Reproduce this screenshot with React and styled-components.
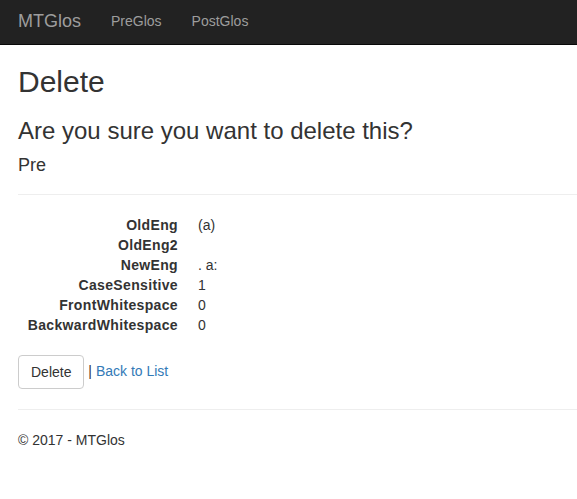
import styled, { createGlobalStyle } from 'styled-components';

const GlobalStyle = createGlobalStyle`
  * { box-sizing: border-box; }
  body {
    margin: 0;
    font-family: "Liberation Sans", Arial, Helvetica, sans-serif;
    font-size: 14px;
    line-height: 1.42857143;
    color: #333;
    background: #fff;
  }
`;

const Navbar = styled.nav`
  display: flex;
  align-items: flex-start;
  height: 45px;
  background: #222;
  border-bottom: 1px solid #080808;
`;

const Brand = styled.a`
  padding: 11px 15px 0 18px;
  font-size: 18px;
  line-height: 20px;
  color: #9d9d9d;
  text-decoration: none;
`;

const NavLink = styled.a`
  padding: 11px 15px 0;
  line-height: 20px;
  color: #9d9d9d;
  text-decoration: none;
`;

const Container = styled.div`
  padding: 0 0 0 18px;
`;

const Title = styled.h2`
  margin: 20px 0 10px;
  font-size: 30px;
  font-weight: 500;
  line-height: 1.1;
`;

const Question = styled.h3`
  margin: 20px 0 10px;
  font-size: 24px;
  font-weight: 500;
  line-height: 1.1;
`;

const Subtitle = styled.h4`
  margin: 12px 0 8px;
  font-size: 18px;
  font-weight: 500;
  line-height: 1.1;
`;

const Rule = styled.hr`
  margin: ${(p) => p.$top ?? 20}px 0 20px;
  border: 0;
  border-top: 1px solid #eee;
  height: 0;
`;

const DetailList = styled.dl`
  margin: 0 0 20px;
  display: grid;
  grid-template-columns: 160px 1fr;
  column-gap: 20px;
`;

const Term = styled.dt`
  font-weight: bold;
  text-align: right;
  white-space: nowrap;
  letter-spacing: 0.35px;
  min-height: 20px;
`;

const Value = styled.dd`
  margin: 0;
  min-height: 20px;
`;

const Actions = styled.div`
  line-height: 20px;
`;

const Button = styled.button`
  display: inline-block;
  padding: 6px 12px;
  font-family: inherit;
  font-size: 14px;
  line-height: 20px;
  color: #333;
  background: #fff;
  border: 1px solid #ccc;
  border-radius: 4px;
  vertical-align: middle;
  cursor: pointer;
`;

const Link = styled.a`
  color: #337ab7;
  text-decoration: none;
`;

const Footer = styled.footer`
  p {
    margin: 0 0 10px;
  }
`;

export default function App() {
  const details = [
    ['OldEng', '(a)'],
    ['OldEng2', ''],
    ['NewEng', '. a:'],
    ['CaseSensitive', '1'],
    ['FrontWhitespace', '0'],
    ['BackwardWhitespace', '0'],
  ];

  return (
    <>
      <GlobalStyle />
      <Navbar>
        <Brand href="#">MTGlos</Brand>
        <NavLink href="#">PreGlos</NavLink>
        <NavLink href="#">PostGlos</NavLink>
      </Navbar>
      <Container>
        <Title>Delete</Title>
        <Question>Are you sure you want to delete this?</Question>
        <div>
          <Subtitle>Pre</Subtitle>
          <Rule $top={18} />
          <DetailList>
            {details.map(([name, value]) => [
              <Term key={name}>{name}</Term>,
              <Value key={name + '-v'}>{value}</Value>,
            ])}
          </DetailList>
          <Actions>
            <Button>Delete</Button> | <Link href="#">Back to List</Link>
          </Actions>
        </div>
        <Rule />
        <Footer>
          <p>© 2017 - MTGlos</p>
        </Footer>
      </Container>
    </>
  );
}
